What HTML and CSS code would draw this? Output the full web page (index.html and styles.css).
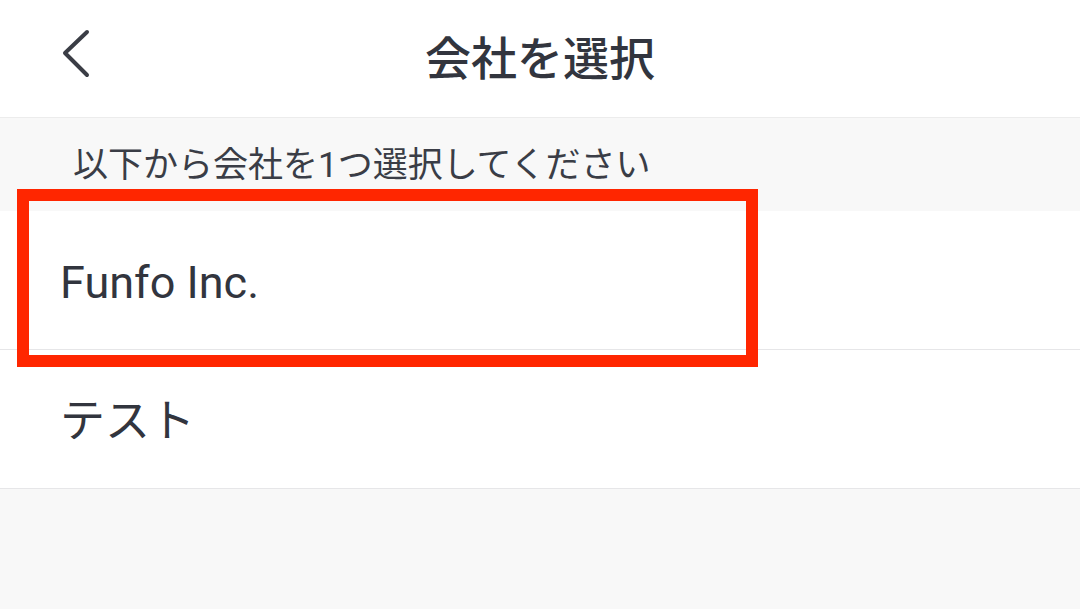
FILE: index.html
```html
<!DOCTYPE html>
<html>
<head>
  <title>会社を選択</title>
  <meta name="viewport" content="width=device-width, initial-scale=1.0">
  <link rel="stylesheet" href="styles.css">
</head>
<body>
  <header class="topbar">
    <button class="back" aria-label="戻る">
      <svg width="40" height="60" viewBox="0 0 40 60">
        <polyline points="29,12 7,33 29,55" fill="none" stroke="#3a3d45" stroke-width="4" stroke-linecap="round" stroke-linejoin="round"/>
      </svg>
    </button>
    <h1>会社を選択</h1>
  </header>
  <div class="hint">以下から会社を1つ選択してください</div>
  <ul class="list">
    <li class="item">
      Funfo Inc.
      <div class="mark"></div>
    </li>
    <li class="item">テスト</li>
  </ul>
</body>
</html>
```

FILE: styles.css
```css
body {
  margin: 0;
  background: #f8f8f8;
  font-family: Roboto, 'Noto Sans CJK JP', sans-serif;
  color: #32353e;
  min-height: 100vh;
}
.topbar {
  height: 117px;
  background: white;
  border-bottom: 1px solid #ececec;
  display: flex;
  align-items: center;
  justify-content: center;
  position: relative;
}
.back {
  position: absolute;
  left: 58px;
  top: 20px;
  background: none;
  border: none;
  padding: 0;
  cursor: pointer;
}
.topbar h1 {
  margin: 0;
  font-size: 46px;
  font-weight: 500;
  line-height: 1;
  color: #32353e;
}
.hint {
  box-sizing: border-box;
  height: 93px;
  padding: 30px 0 0 73px;
  font-size: 35px;
  line-height: 35px;
  color: #3a3d46;
}
.list {
  list-style: none;
  margin: 0;
  padding: 0;
  background: white;
}
.item {
  box-sizing: border-box;
  height: 139px;
  border-bottom: 1px solid #e6e6e8;
  display: flex;
  align-items: center;
  padding: 4px 0 0 60px;
  font-size: 45px;
  line-height: 1;
  position: relative;
}
.mark {
  position: absolute;
  left: 17px;
  top: -22px;
  width: 717px;
  height: 154px;
  border: 12px solid #ff2600;
}
```
